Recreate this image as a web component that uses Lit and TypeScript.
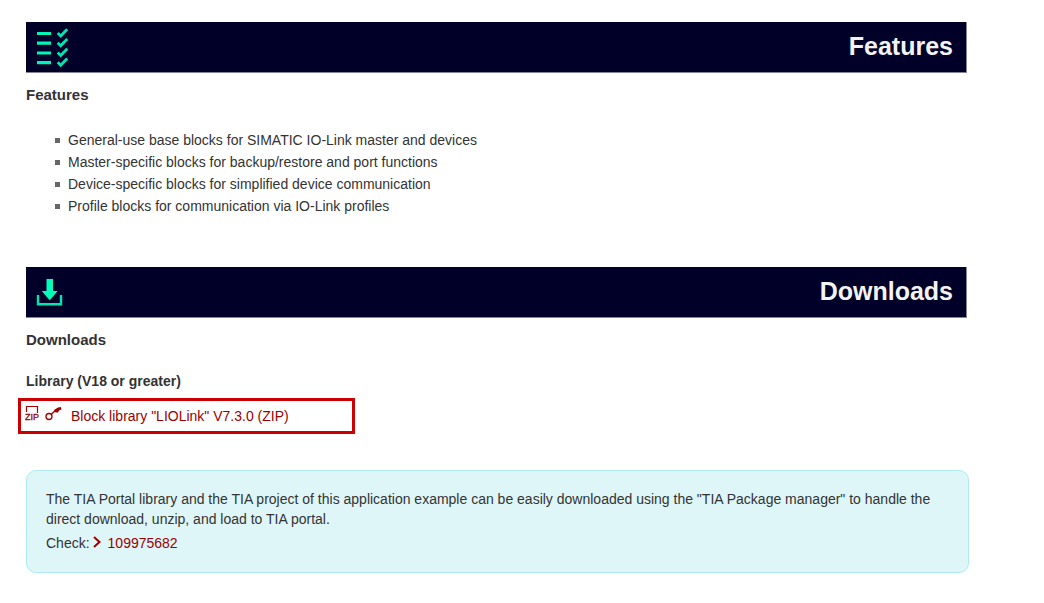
import { LitElement, html, css, svg } from "lit";
import { customElement, property } from "lit/decorators.js";

@customElement("section-banner")
class SectionBanner extends LitElement {
  @property() label = "";
  @property() icon = "";

  static styles = css`
    :host { display: block; }
    .banner {
      display: flex;
      align-items: center;
      justify-content: space-between;
      box-sizing: border-box;
      min-height: 51px;
      padding: 0 13px 0 8px;
      background: #000028;
      border: solid #85859a;
      border-width: 0 1px 1px 0;
    }
    .icon { display: block; flex: none; }
    .label {
      color: #f3f3f3;
      font-size: 25px;
      font-weight: bold;
      line-height: 28px;
      padding-bottom: 2px;
    }
  `;

  private checklist() {
    return svg`
      <path d="M3 11.500h14M3 21.200h14M3 31h14M3 40.700h14" stroke="#00f5b8" stroke-width="3.200"/>
      <path d="M23.700 11l3 3 6.500-6.700M23.700 20.700l3 3 6.500-6.700M23.700 30.500l3 3 6.500-6.700M23.700 40.200l3 3 6.500-6.700"
        fill="none" stroke="#00e6b0" stroke-width="2.800"/>`;
  }

  private download() {
    return svg`
      <path d="M12.500 12h6.500v12h4.700l-8 9.200-8-9.200h4.800z" fill="#00ffb9"/>
      <path d="M4 28v9.200h23V28" fill="none" stroke="#00e6b0" stroke-width="2.400"/>`;
  }

  render() {
    return html`<div class="banner">
      <svg class="icon" width="40" height="50" viewBox="0 0 40 50" aria-hidden="true">
        ${this.icon === "download" ? this.download() : this.checklist()}
      </svg>
      <span class="label">${this.label}</span>
    </div>`;
  }
}

@customElement("app-root")
class AppRoot extends LitElement {
  static styles = css`
    :host {
      display: block;
      font-family: "Liberation Sans", Arial, sans-serif;
      font-size: 14px;
      line-height: 20px;
      color: #333;
      background: #fff;
    }
    .page { padding: 22px 75px 30px 26px; }
    .banner { margin-right: 2px; }
    .title { margin: 12px 0 0; font-size: 15px; line-height: 20px; }
    .subtitle { margin: 21px 0 0; font-size: 14px; line-height: 20px; }
    .features {
      list-style: none;
      margin: 24px 0 50px;
      padding: 0 0 0 29px;
    }
    .feature {
      display: flex;
      align-items: center;
      gap: 8px;
      line-height: 22px;
    }
    .feature::before {
      content: "";
      flex: none;
      width: 5px;
      height: 5px;
      background: #666;
    }
    .link { color: #900; text-decoration: none; }
    .link:hover { text-decoration: underline; }
    .highlight {
      display: flex;
      align-items: center;
      box-sizing: border-box;
      width: 337px;
      max-width: 100%;
      min-height: 36px;
      margin: 7px 0 36px -8px;
      padding: 0 4px;
      border: 3px solid #c00;
    }
    .file { display: flex; align-items: center; }
    .file-icons { flex: none; margin-right: 8px; }
    .zip {
      font: 9px "Liberation Sans", Arial, sans-serif;
      fill: #a00000;
      stroke: #a00000;
      stroke-width: 0.3px;
    }
    .note {
      padding: 18px 19px 19px;
      background: #dff6f8;
      border: 1px solid #b0eaf0;
      border-radius: 10px;
    }
    .text { margin: 0; }
    .check {
      display: flex;
      align-items: center;
      margin: 4px 0 0;
    }
    .reference { display: flex; align-items: center; margin-left: 2px; }
    .chevron { flex: none; margin-right: 7px; }
  `;

  private features = [
    "General-use base blocks for SIMATIC IO-Link master and devices",
    "Master-specific blocks for backup/restore and port functions",
    "Device-specific blocks for simplified device communication",
    "Profile blocks for communication via IO-Link profiles",
  ];

  render() {
    return html`<main class="page">
      <section>
        <section-banner class="banner" label="Features" icon="checklist"></section-banner>
        <h2 class="title">Features</h2>
        <ul class="features">
          ${this.features.map((item) => html`<li class="feature">${item}</li>`)}
        </ul>
      </section>
      <section>
        <section-banner class="banner" label="Downloads" icon="download"></section-banner>
        <h2 class="title">Downloads</h2>
        <h3 class="subtitle">Library (V18 or greater)</h3>
        <div class="highlight">
          <a class="link file" href="#library">
            <svg class="file-icons" width="38" height="20" viewBox="0 0 38 20" aria-hidden="true">
              <path d="M1.500 6V0.500h11V7" fill="none" stroke="#a00000" stroke-width="1.200"/>
              <text class="zip" x="0" y="14">ZIP</text>
              <circle cx="24" cy="10.500" r="3" fill="none" stroke="#a00000" stroke-width="1.300"/>
              <path d="M26 8.500l4.500-4" stroke="#a00000" stroke-width="1.500"/>
              <path d="M29 4l4-2.500L36 1l.5 2.500-2.500 1-1 2h-2.500z" fill="#a00000"/>
            </svg>
            <span>Block library "LIOLink" V7.3.0 (ZIP)</span>
          </a>
        </div>
        <div class="note">
          <p class="text">
            The TIA Portal library and the TIA project of this application example can be easily
            downloaded using the "TIA Package manager" to handle the direct download, unzip, and
            load to TIA portal.
          </p>
          <p class="check">
            <span>Check:</span>
            <a class="link reference" href="#109975682">
              <svg class="chevron" width="9" height="14" viewBox="0 0 9 14" aria-hidden="true">
                <path d="M2 1l5.500 5-5.500 5" fill="none" stroke="#a00000" stroke-width="2"/>
              </svg>
              <span>109975682</span>
            </a>
          </p>
        </div>
      </section>
    </main>`;
  }
}
